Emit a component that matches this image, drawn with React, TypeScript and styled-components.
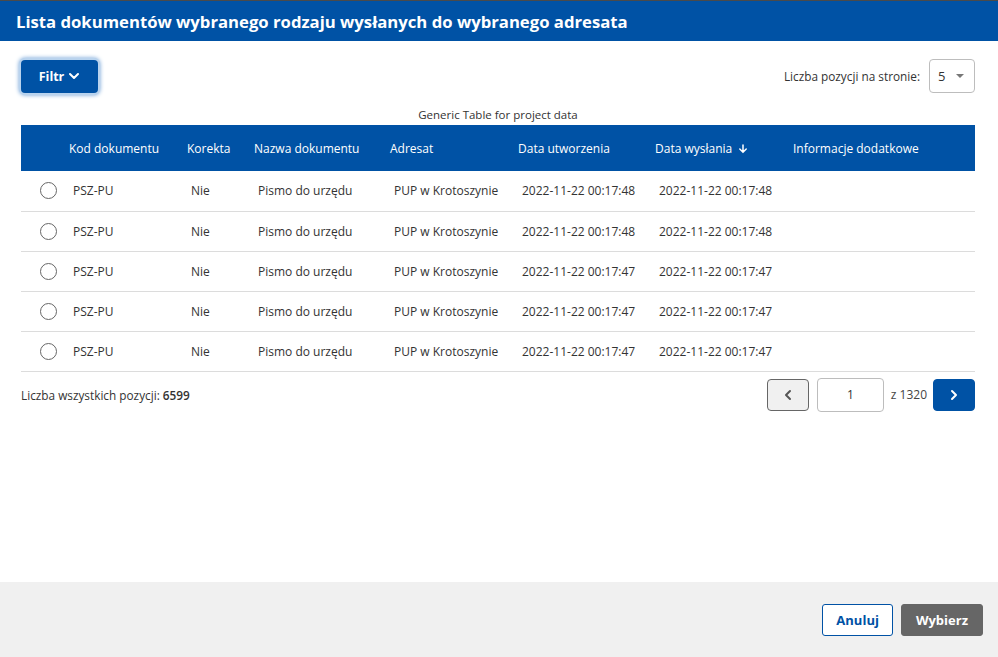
import React from 'react';
import styled, { createGlobalStyle } from 'styled-components';

const BLUE = '#0052a5';

const GlobalStyle = createGlobalStyle`
  html, body {
    margin: 0;
    padding: 0;
    background: #fff;
    font-family: 'Open Sans', 'DejaVu Sans', sans-serif;
    color: #333;
  }
  * { box-sizing: border-box; }
`;

const Dialog = styled.div`
  display: flex;
  flex-direction: column;
  height: 100vh;
  width: 100%;
`;

const Header = styled.header`
  height: 41px;
  background: ${BLUE};
  border-top: 1px solid #4a4a4a;
  display: flex;
  align-items: center;
  padding: 0 16px;
`;

const Title = styled.h1`
  margin: 0;
  font-size: 16.7px;
  font-weight: 700;
  color: #fff;
  letter-spacing: 0;
`;

const Body = styled.main`
  flex: 1;
  padding: 18px 23px 0 21px;
`;

const Toolbar = styled.div`
  display: flex;
  align-items: center;
  justify-content: space-between;
  height: 34px;
  margin-bottom: 15px;
`;

const FilterButton = styled.button`
  height: 33px;
  width: 77px;
  border: none;
  border-radius: 4px;
  background: ${BLUE};
  color: #fff;
  font-family: inherit;
  font-size: 12.5px;
  font-weight: 700;
  display: flex;
  align-items: center;
  justify-content: center;
  gap: 4px;
  box-shadow: 0 0 0 2px #b9d3ee, 0 0 4px 2px #6d9fd6;
  cursor: pointer;
`;

const PerPage = styled.div`
  display: flex;
  align-items: center;
  gap: 9px;
  font-size: 11.8px;
  color: #333;
`;

const SelectBox = styled.div`
  width: 46px;
  height: 34px;
  border: 1px solid #bdbdbd;
  border-radius: 4px;
  display: flex;
  align-items: center;
  justify-content: space-between;
  padding: 0 10px 0 8px;
  font-size: 13px;
`;

const Caret = styled.span`
  width: 0;
  height: 0;
  border-left: 4px solid transparent;
  border-right: 4px solid transparent;
  border-top: 4px solid #777;
`;

const Table = styled.table`
  width: 954px;
  border-collapse: collapse;
  font-size: 12px;
  table-layout: fixed;
`;

const Caption = styled.caption`
  caption-side: top;
  font-size: 11.5px;
  color: #333;
  height: 17px;
  line-height: 13px;
  padding-top: 0;
`;

const HeadCell = styled.th<{ $w: number }>`
  width: ${({ $w }) => $w}px;
  height: 46px;
  background: ${BLUE};
  color: #fff;
  font-weight: 400;
  text-align: left;
  padding: 0 0 0 4px;
  white-space: nowrap;
`;

const Row = styled.tr`
  border-bottom: 1px solid #dcdcdc;
`;

const Cell = styled.td`
  height: 40px;
  padding: 0 0 0 8px;
  color: #333;
  white-space: nowrap;
`;

const Radio = styled.span`
  display: block;
  width: 17px;
  height: 17px;
  border: 1px solid #666;
  border-radius: 50%;
  margin-left: 11px;
`;

const Footer = styled.div`
  display: flex;
  align-items: center;
  justify-content: space-between;
  margin-top: 6px;
`;

const Total = styled.div`
  font-size: 11.8px;
  color: #333;
  b { font-weight: 600; }
`;

const Pager = styled.div`
  display: flex;
  align-items: center;
`;

const PageBtn = styled.button<{ $primary?: boolean }>`
  width: 42px;
  height: 32px;
  border-radius: 4px;
  border: 1px solid ${({ $primary }) => ($primary ? BLUE : '#666')};
  background: ${({ $primary }) => ($primary ? BLUE : '#f0f0f0')};
  color: ${({ $primary }) => ($primary ? '#fff' : '#555')};
  display: flex;
  align-items: center;
  justify-content: center;
  padding: 0;
  cursor: pointer;
`;

const PageInput = styled.div`
  width: 67px;
  height: 34px;
  margin-left: 8px;
  border: 1px solid #bdbdbd;
  border-radius: 4px;
  display: flex;
  align-items: center;
  justify-content: center;
  font-size: 12px;
  color: #333;
`;

const PageOf = styled.span`
  font-size: 12px;
  color: #444;
  margin: 0 6px 0 7px;
`;

const ActionBar = styled.footer`
  height: 75px;
  background: #f0f0f0;
  display: flex;
  align-items: center;
  justify-content: flex-end;
  gap: 8px;
  padding: 0 15px 0 0;
`;

const ActionBtn = styled.button<{ $variant: 'outline' | 'solid' }>`
  height: 32px;
  padding: 0 ${({ $variant }) => ($variant === 'outline' ? 13 : 14)}px;
  border-radius: 3px;
  font-family: inherit;
  font-size: 13px;
  font-weight: 700;
  border: 1px solid ${({ $variant }) => ($variant === 'outline' ? BLUE : '#666')};
  background: ${({ $variant }) => ($variant === 'outline' ? '#fff' : '#666')};
  color: ${({ $variant }) => ($variant === 'outline' ? BLUE : '#fff')};
  cursor: pointer;
`;

const Chevron = ({ dir }: { dir: 'down' | 'left' | 'right' }) => {
  const d =
    dir === 'down' ? 'M2 4l4 4 4-4' : dir === 'left' ? 'M8 2L4 6l4 4' : 'M4 2l4 4-4 4';
  return (
    <svg width="12" height="12" viewBox="0 0 12 12" fill="none">
      <path d={d} stroke="currentColor" strokeWidth="2" strokeLinecap="round" strokeLinejoin="round" />
    </svg>
  );
};

const SortArrow = () => (
  <svg width="10" height="10" viewBox="0 0 10 10" fill="none" style={{ marginLeft: 6, verticalAlign: -1 }}>
    <path d="M5 1v7M1.8 5L5 8.2 8.2 5" stroke="#fff" strokeWidth="1.5" strokeLinecap="round" />
  </svg>
);

const columns: [string, number][] = [
  ['', 44],
  ['Kod dokumentu', 118],
  ['Korekta', 67],
  ['Nazwa dokumentu', 136],
  ['Adresat', 128],
  ['Data utworzenia', 137],
  ['Data wysłania', 138],
  ['Informacje dodatkowe', 186],
];

const rows = [
  '2022-11-22 00:17:48',
  '2022-11-22 00:17:48',
  '2022-11-22 00:17:47',
  '2022-11-22 00:17:47',
  '2022-11-22 00:17:47',
];

export default function App() {
  return (
    <>
      <GlobalStyle />
      <Dialog>
        <Header>
          <Title>Lista dokumentów wybranego rodzaju wysłanych do wybranego adresata</Title>
        </Header>
        <Body>
          <Toolbar>
            <FilterButton>
              Filtr <Chevron dir="down" />
            </FilterButton>
            <PerPage>
              Liczba pozycji na stronie:
              <SelectBox>
                5 <Caret />
              </SelectBox>
            </PerPage>
          </Toolbar>
          <Table>
            <Caption>Generic Table for project data</Caption>
            <thead>
              <tr>
                {columns.map(([label, w]) => (
                  <HeadCell key={label} $w={w}>
                    {label}
                    {label === 'Data wysłania' && <SortArrow />}
                  </HeadCell>
                ))}
              </tr>
            </thead>
            <tbody>
              {rows.map((date, i) => (
                <Row key={i}>
                  <Cell>
                    <Radio />
                  </Cell>
                  <Cell>PSZ-PU</Cell>
                  <Cell>Nie</Cell>
                  <Cell>Pismo do urzędu</Cell>
                  <Cell>PUP w Krotoszynie</Cell>
                  <Cell>{date}</Cell>
                  <Cell>{date}</Cell>
                  <Cell />
                </Row>
              ))}
            </tbody>
          </Table>
          <Footer>
            <Total>
              Liczba wszystkich pozycji: <b>6599</b>
            </Total>
            <Pager>
              <PageBtn>
                <Chevron dir="left" />
              </PageBtn>
              <PageInput>1</PageInput>
              <PageOf>z 1320</PageOf>
              <PageBtn $primary>
                <Chevron dir="right" />
              </PageBtn>
            </Pager>
          </Footer>
        </Body>
        <ActionBar>
          <ActionBtn $variant="outline">Anuluj</ActionBtn>
          <ActionBtn $variant="solid">Wybierz</ActionBtn>
        </ActionBar>
      </Dialog>
    </>
  );
}
